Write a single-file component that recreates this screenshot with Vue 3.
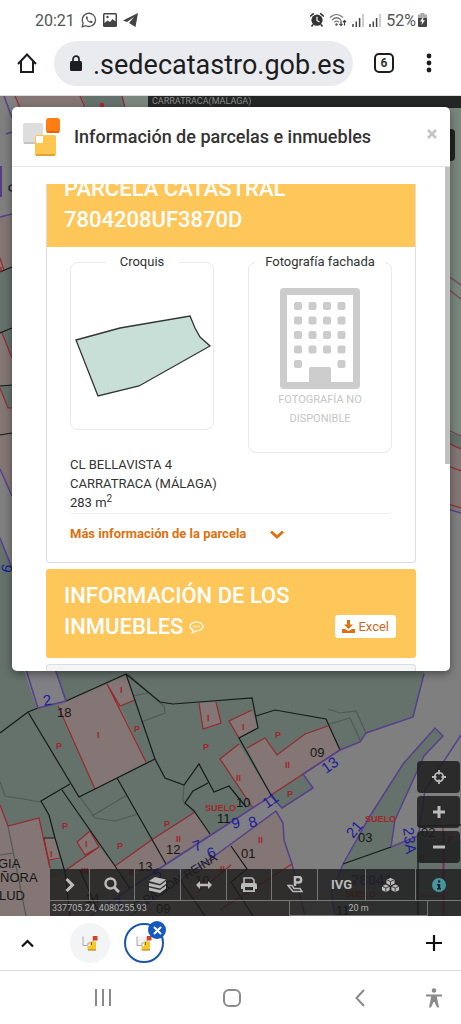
<!--
  Ficha de parcela del visor catastral, vista en el navegador del móvil.
  De arriba abajo: barra de estado, barra de direcciones, mapa con el diálogo
  de información encima, pestañas agrupadas y botones de navegación.
-->

<template>
  <div class="screen">
    <header class="status">
      <div class="status-group">
        <span class="clock">20:21</span>
        <svg width="16" height="16" viewBox="0 0 16 16" fill="none" stroke="#555" stroke-width="1.3">
          <path d="M1.2 14.8l1-3.6A6.6 6.6 0 1 1 4.800 13.700z" />
          <path d="M5.200 4.500l1-.3.9 2-.7.9c.6 1.200 1.300 1.900 2.500 2.400l.9-.9 1.900 1-.4 1.200c-2.600 1.300-7.200-3-6.100-6.300z" fill="#555" stroke="none" />
        </svg>
        <svg width="14" height="14" viewBox="0 0 14 14">
          <rect width="14" height="14" rx="1.500" fill="#444" />
          <path d="M1.500 1.500h11v7L9.500 6 7 9 4.500 7.500l-3 2.500z" fill="#fff" />
          <circle cx="4.500" cy="4" r="1.200" fill="#444" />
        </svg>
        <svg width="15" height="14" viewBox="0 0 15 14">
          <path d="M15 0L0 7.500l4 1.500L11 4 6 10l6.500 4z" fill="#444" />
        </svg>
      </div>
      <div class="status-group status-right">
        <svg width="14" height="14" viewBox="0 0 14 14">
          <path d="M0 3.500L3.800.3M14 3.500L10.200.3M3 11.500L1.500 13.500M11 11.500l1.500 2" stroke="#333" stroke-width="1.600" />
          <circle cx="7" cy="7.200" r="5.600" fill="#333" />
          <path d="M7 3.800v3.600l2.500 1.500" fill="none" stroke="#fff" stroke-width="1.200" />
        </svg>
        <svg width="18" height="14" viewBox="0 0 18 14" fill="none" stroke="#777" stroke-width="1.200">
          <path d="M1 4.500c4-4 9-4 13 0M3 7c3-3 6-3 9 0M5.200 9.300c1.500-1.500 3-1.500 4.600 0" />
          <circle cx="7.500" cy="11.500" r="1.200" fill="#555" stroke="none" />
          <path d="M12 7.500v5M10.500 11l1.500 1.500 1.500-1.500M15.500 12.500v-5M14 9l1.500-1.500L17 9" stroke="#444" />
        </svg>
        <svg v-for="n in 2" :key="n" width="12" height="13" viewBox="0 0 12 13">
          <path d="M1 13v-3M4.300 13V7.500M7.600 13V4" stroke="#444" stroke-width="1.500" />
          <path d="M11 13V0" stroke="#bbb" stroke-width="1.500" />
        </svg>
        <span class="battery">52%</span>
        <svg width="9" height="14" viewBox="0 0 9 14">
          <path d="M2.500 0h4v1.500H9V5H0V1.500h2.500z" fill="#aaa" />
          <path d="M0 5h9v8a1 1 0 0 1-1 1H1a1 1 0 0 1-1-1z" fill="#444" />
          <path d="M5.500 3.500L2 8.500h2L3.500 12 7 7.200H5z" fill="#fff" />
        </svg>
      </div>
    </header>

    <div class="address-bar">
      <button class="icon-button" aria-label="Inicio">
        <svg width="20" height="20" viewBox="0 0 20 20" fill="none" stroke="#1c1d20" stroke-width="2">
          <path d="M1 11L10 1.500 19 11M4 8.500V19h12V8.500" />
        </svg>
      </button>
      <label class="address">
        <svg width="12" height="17" viewBox="0 0 12 17">
          <path d="M3 7V4.200a3 3 0 0 1 6 0V7" fill="none" stroke="#1c1d20" stroke-width="1.700" />
          <rect y="6" width="12" height="10" rx="1.500" fill="#1c1d20" />
        </svg>
        <input v-model="url" class="address-input" type="text" aria-label="Dirección" />
      </label>
      <button class="icon-button tabs-count" aria-label="Pestañas abiertas">6</button>
      <button class="icon-button" aria-label="Más opciones">
        <svg width="6" height="20" viewBox="0 0 6 20" fill="#1c1d20">
          <circle cx="3" cy="3" r="2.400" /><circle cx="3" cy="10" r="2.400" /><circle cx="3" cy="17" r="2.400" />
        </svg>
      </button>
    </div>

    <main class="viewer">
      <svg class="map" viewBox="0 96 461 820" preserveAspectRatio="xMidYMax slice" aria-hidden="true">
        <rect y="96" width="461" height="820" fill="#7f7f7f" />

        <!-- franja superior -->
        <path class="pink" d="M16 96H81L90 110H20z" />
        <path class="green" d="M81 96H148V110H88z" />
        <path d="M123 96H148V110H126z" fill="#79877d" />
        <path class="red" d="M15 96l6 14M80 96l6 14M122 96l3 12" />
        <path class="purple" d="M4 96l8 22M6 134l6-2" />
        <rect x="100" y="103" width="4" height="6" fill="#a32a2f" />

        <!-- margen izquierdo -->
        <path class="pink" d="M0 218L12 214V670H0z" />
        <path class="green" d="M0 273L12 267V328L0 333z" />
        <path class="green" d="M2 333L12 329V357z" />
        <path class="green" d="M0 385H12V408H8z" />
        <path d="M0 470L12 495V680H0z" fill="#7f7f7f" />
        <path class="green" d="M0 538L30 610V680H0z" />
        <path class="black" d="M0 272l12-5M0 333l12-5M0 386l12-1M0 435l12-2" />
        <path class="red" d="M0 258l4 12M2 333l10 25M0 388l8 20h4" />
        <path class="purple" d="M0 217l12-3M0 469l12 27M0 538l28 70" />
        <rect y="166" width="2" height="31" fill="#563a83" />
        <circle cx="12" cy="188" r="3" class="black" />
        <path class="red" d="M1 267v5" />
        <text x="3" y="572" class="number" transform="rotate(-75 8 568)">6</text>

        <!-- margen derecho -->
        <path d="M440 108H461V440L440 430z" fill="#78867c" />
        <rect x="440" y="129" width="15" height="32" rx="4" fill="#20231f" />
        <path class="green" d="M440 430L461 436V460H440z" />
        <path class="pink" d="M440 442L461 449V511L440 505z" />
        <path class="plum" d="M448 276l13 9M448 289l13 10M448 430l13 6" />
        <path class="red" d="M448 443l13 6M448 466l13 5M448 504l13 4" />
        <path class="purple" d="M448 509l13 4" />

        <!-- manzana principal -->
        <path class="green" d="M0 660H424V674L413 717 366 733 360 742 340 750 271 795 120 895 90 916H0z" />
        <path class="road" d="M20 660L37 708 66 701 52 660z" />
        <path class="pink" d="M57 706L107 684 126 675 135 700 120 706 146 762 95 789z" />
        <path class="pink" d="M199 703L216 702 221 723 203 729z" />
        <path class="pink" d="M229 721L252 710 258 728 239 738z" />
        <path class="pink" d="M220 759L239 744 271 795 253 808z" />
        <path class="pink" d="M247 748L265 738 277 755 305 734 328 726 340 750 271 795z" />
        <path class="green" d="M271 795L303 774 313 788 282 808z" />
        <path class="pink" d="M153 839L195 812 210 834 128 888 115 866z" />
        <path class="pink" d="M0 805L8 826 39 818 50 868V916H0z" />
        <path class="pink" d="M44 838H55L60 860H49z" />
        <path class="pink" d="M77 842L90 831 99 847 85 855z" />
        <path class="pink" d="M66 871L99 847 115 866 128 888 90 916H50V880z" />

        <path class="grey" d="M0 782l5 14 36 6M80 797l15 21 20 3 23-7M92 816l35-21M133 696l15-3M141 722l24-9-1-7-36-32M184 785l-1 15 2 5" />
        <path class="grey" d="M328 709l12 4 16-2 10 22M330 724l20-6 10 22M8 826l18 90M0 855l14-2" />
        <path class="red" d="M58 706l37 83M107 684l39 78M107 684l13 22 15-6M199 703l4 26 18-6-5-21M239 738l-10-17 23-11" />
        <path class="red" d="M239 744l-19 15 33 49M247 748l18-10 12 17 28-21 23-8M271 795l69-45M153 839l42-27M153 839l-38 27M0 805l8 21 31-8 11 50" />
        <path class="red" d="M99 847l-33 23M77 842l13-11 9 16-14 8zM49 860l11-2M44 838l6 30" />
        <path class="black" d="M0 733l28-21M66 701l60-27 29 85-76 38-51-85 10-4M126 674l34 28 13 2 26-2 53-4 6 30-19 10 32 57" />
        <path class="black" d="M155 759l10 19 19 7 15-21 15 28 15-6 17 21M256 716l19-6 51 9 14 31M208 783l-15 8-8 12 9 8 16 23" />
        <path class="black" d="M70 784l-29 17 8 14 6 23 10 34 5 44M62 790l53 76 30 45M117 778l49 86M44 838h11M80 870l20 46" />

        <!-- calle y manzana inferior -->
        <path class="road" d="M271 796L165 865 90 916H130L220 852 276 811z" />
        <path class="pink" d="M276 811L283 823 284 840 292 864 305 916H130L220 852z" />
        <path class="purple" d="M23 660l15 48 28-7-14-41M424 674l-11 43-47 16-6 9-20 8-37 24 10 14-31 20-11-12-106 69-75 51" />
        <path class="purple" d="M130 916l90-64 56-41 7 12 1 17 8 24 13 52" />
        <path class="black" d="M231 846l16 23-16 13 22 34M180 880l25 36" />
        <path class="red" d="M292 864l-72 46M231 865l-34 28" />

        <!-- parcelas de la derecha -->
        <path class="green" d="M435 728L443 736 424 756 395 820 391 847 418 837 461 841V916H335L331 893 343 864 370 816 403 764z" />
        <path class="purple" d="M335 916l-4-23 12-29 27-48 33-52 32-36 8 8-19 20-29 64-4 27 29-12M461 735l-36 55-7 48M444 832v84" />
        <path class="black" d="M343 864l48-17M418 826l43-1M418 860v56" />
        <path class="red" d="M443 825v90M418 896h25" />

        <g class="label">
          <text v-for="label in labels" :key="label.id" :class="label.kind" :x="label.x" :y="label.y"
            :transform="label.turn ? `rotate(${label.turn} ${label.x} ${label.y})` : null">{{ label.text }}</text>
        </g>
      </svg>

      <div class="place">CARRATRACA(MALAGA)</div>

      <section class="dialog" role="dialog" aria-labelledby="dialog-title">
        <header class="dialog-header">
          <svg width="38" height="38" viewBox="0 0 38 38">
            <rect y="5" width="20" height="21" rx="2" fill="#ddd" />
            <path d="M1 25h19" stroke="#bbb" stroke-width="1.500" />
            <rect x="23" width="14" height="15" rx="3" fill="#ff7d12" />
            <path d="M24 14h12" stroke="#dc5b15" stroke-width="1.500" />
            <rect x="12" y="17" width="21" height="21" rx="2" fill="#fec64f" />
            <path d="M13 37h19" stroke="#d99725" stroke-width="1.500" />
            <rect x="13" y="18" width="7" height="7" rx="1" fill="#fff" />
          </svg>
          <h1 id="dialog-title" class="dialog-title">Información de parcelas e inmuebles</h1>
          <button class="close" aria-label="Cerrar">
            <svg width="10" height="10" viewBox="0 0 10 10"><path d="M1 1l8 8M9 1L1 9" stroke="#c4c4c4" stroke-width="2.600" /></svg>
          </button>
        </header>

        <div class="dialog-body">
          <div class="card">
            <h2 class="banner banner-scrolled">PARCELA CATASTRAL<br />7804208UF3870D</h2>
            <div class="card-body">
              <div class="pictures">
                <fieldset class="picture">
                  <legend>Croquis</legend>
                  <svg class="sketch" viewBox="0 0 142 157">
                    <path d="M5 68L49 56 119 44 124 56 129 65 139 74 68 114 27 124z" fill="#c7dfd7" stroke="#333" stroke-width="1.300" />
                  </svg>
                </fieldset>
                <fieldset class="picture photo">
                  <legend>Fotografía fachada</legend>
                  <svg width="80" height="101" viewBox="0 0 80 101" fill="#ccc">
                    <path fill-rule="evenodd" d="M4 0H76a4 4 0 0 1 4 4V97a4 4 0 0 1-4 4H4a4 4 0 0 1-4-4V4a4 4 0 0 1 4-4zM7 7V94H29V81a2 2 0 0 1 2-2H49a2 2 0 0 1 2 2V94H73V7z" />
                    <rect v-for="w in windows" :key="w.id" :x="w.x" :y="w.y" width="8" height="8" rx="2" />
                  </svg>
                  <p>FOTOGRAFÍA NO DISPONIBLE</p>
                </fieldset>
              </div>
              <p class="location">CL BELLAVISTA 4<br />CARRATRACA (MÁLAGA)<br />283 m<sup>2</sup></p>
              <a class="more" href="#">
                Más información de la parcela
                <svg width="14" height="9" viewBox="0 0 14 9"><path d="M1 1.500l6 5.500 6-5.500" fill="none" stroke="#e0700f" stroke-width="2.800" /></svg>
              </a>
            </div>
          </div>

          <div class="banner banner-row">
            <h2>INFORMACIÓN DE LOS INMUEBLES
              <svg width="15" height="13" viewBox="0 0 15 13">
                <path d="M7.500 1C11 1 14 2.800 14 5.300s-3 4.400-6.500 4.400L3 12l1-3C2.200 8.200 1 7 1 5.300 1 2.800 4 1 7.500 1z" fill="none" stroke="#fff" stroke-width="1.100" />
                <path d="M4 5.400h1.500M6.800 5.400h1.500M9.600 5.400h1.500" stroke="#fff" stroke-width="1.500" />
              </svg>
            </h2>
            <button class="excel">
              <svg width="13" height="13" viewBox="0 0 13 13" fill="#e0700f">
                <path d="M5 0h3v4.500h3L6.500 9 2 4.500h3z" />
                <path d="M0 9h3l3.500 2L10 9h3v4H0z" />
              </svg>
              Excel
            </button>
          </div>
          <div class="next-card"></div>
        </div>
        <div class="scrollbar"></div>
      </section>

      <div class="zoom-controls">
        <button aria-label="Mi ubicación">
          <svg width="14" height="14" viewBox="0 0 14 14" fill="none" stroke="#bbb" stroke-width="1.800">
            <circle cx="7" cy="7" r="4.300" /><path d="M7 0v4.500M7 9.500V14M0 7h4.500M9.500 7H14" />
          </svg>
        </button>
        <button aria-label="Acercar">
          <svg width="12" height="12" viewBox="0 0 12 12" stroke="#bbb" stroke-width="3"><path d="M6 0v12M0 6h12" /></svg>
        </button>
        <button aria-label="Alejar">
          <svg width="12" height="12" viewBox="0 0 12 12" stroke="#bbb" stroke-width="3"><path d="M0 6h12" /></svg>
        </button>
      </div>

      <div class="tools">
        <nav class="tool-row">
          <button aria-label="Desplegar">
            <svg width="10" height="14" viewBox="0 0 10 14"><path d="M1.500 1l6 6-6 6" fill="none" stroke="#bbb" stroke-width="3" /></svg>
          </button>
          <button aria-label="Buscar">
            <svg width="16" height="16" viewBox="0 0 16 16" fill="none" stroke="#bbb" stroke-width="2.400"><circle cx="6.500" cy="6.500" r="5" /><path d="M10 10l5 5" stroke-width="3" /></svg>
          </button>
          <button aria-label="Capas">
            <svg width="17" height="16" viewBox="0 0 17 16">
              <path d="M6 0l11 2.500L11 7 0 4z" fill="#bbb" />
              <path d="M0 6l11 2.500 6-4.500v3L11 11.500 0 9zM0 10.500l11 2.500 6-4.500v3L11 16 0 13.500z" fill="#bbb" />
            </svg>
          </button>
          <button aria-label="Medir">
            <svg width="16" height="8" viewBox="0 0 16 8" fill="#bbb"><path d="M0 4l4-4v2.800h8V0l4 4-4 4V5.200H4V8z" /></svg>
          </button>
          <button aria-label="Imprimir">
            <svg width="16" height="15" viewBox="0 0 16 15">
              <path d="M3 6V1h8l2 2v3" fill="none" stroke="#bbb" stroke-width="1.600" />
              <path fill="#bbb" fill-rule="evenodd" d="M2 6h12a2 2 0 0 1 2 2v4h-2v3H2v-3H0V8a2 2 0 0 1 2-2zM4 10v3.300h8V10z" />
            </svg>
          </button>
          <button aria-label="Street View">
            <svg width="16" height="17" viewBox="0 0 16 17" fill="none" stroke="#bbb">
              <path d="M8 10V1h3.500a2.600 2.600 0 0 1 0 5.400H8" stroke-width="2.500" />
              <path d="M1 9.500h4l2 3h6l2 3H6z" stroke-width="1.500" />
            </svg>
          </button>
          <button>IVG</button>
          <button aria-label="Edificios 3D">
            <svg width="19" height="16" viewBox="0 0 19 16" fill="#bbb" stroke="#222" stroke-width=".8">
              <path d="M9.500.5L14 2.500V7L9.500 9 5 7V2.500zM4.800 7L9 9v4.500l-4.200 2L.5 13.500V9zM14.200 7l4.300 2v4.500l-4.300 2-4.200-2V9z" />
              <path d="M5.500 2.700l4 1.800 4-1.800M9.500 4.500V8M1 9.200L4.800 11 9 9.200M4.800 11v4M10 9.200l4.200 1.800 4-1.800M14.200 11v4" fill="none" />
            </svg>
          </button>
          <button aria-label="Información">
            <svg width="14" height="14" viewBox="0 0 14 14">
              <circle cx="7" cy="7" r="7" fill="#45969e" />
              <path d="M6 2.500h2.200v2H6zM5 6h3.200v4H9v1.500H5V10h1V7.500H5z" fill="#202020" />
            </svg>
          </button>
        </nav>
        <div class="coordinates">
          <span>337705.24, 4080255.93</span>
          <span class="scale">20 m</span>
        </div>
      </div>
    </main>

    <div class="tab-strip">
      <button class="icon-button" aria-label="Expandir">
        <svg width="13" height="9" viewBox="0 0 13 9"><path d="M1 7.500l5.500-5.500L12 7.500" fill="none" stroke="#111" stroke-width="2.200" /></svg>
      </button>
      <button v-for="tab in tabs" :key="tab.id" class="tab" :class="{ active: tab.active }" :aria-label="tab.title">
        <svg width="16" height="16" viewBox="0 0 16 16">
          <path d="M1 1.500v9h5V8h5V1.500" fill="#f2f2f2" stroke="#aaa" stroke-width="1" />
          <rect x="11" y="1" width="4.500" height="4.500" fill="#d24322" />
          <path d="M8 6.500h6V15H5.500v-4H8z" fill="#f6c62c" />
          <path d="M6 15h8" stroke="#b88a22" stroke-width="1.200" />
          <path d="M9.500 7v3" stroke="#8a6420" />
        </svg>
        <span v-if="tab.active" class="badge">
          <svg width="9" height="9" viewBox="0 0 9 9"><path d="M1 1l7 7M8 1L1 8" stroke="#fff" stroke-width="2" /></svg>
        </span>
      </button>
      <button class="icon-button add" aria-label="Nueva pestaña">
        <svg width="16" height="16" viewBox="0 0 16 16"><path d="M8 0v16M0 8h16" stroke="#111" stroke-width="2.200" /></svg>
      </button>
    </div>

    <nav class="system-bar">
      <button class="icon-button" aria-label="Recientes">
        <svg width="18" height="17" viewBox="0 0 18 17"><path d="M2 0v17M9 0v17M16 0v17" stroke="#8a8a8a" stroke-width="2" /></svg>
      </button>
      <button class="icon-button" aria-label="Inicio del sistema">
        <svg width="18" height="18" viewBox="0 0 18 18"><rect x="1" y="1" width="16" height="16" rx="5" fill="none" stroke="#8a8a8a" stroke-width="2" /></svg>
      </button>
      <button class="icon-button" aria-label="Atrás">
        <svg width="10" height="18" viewBox="0 0 10 18"><path d="M9 1L1.500 9 9 17" fill="none" stroke="#8a8a8a" stroke-width="2" /></svg>
      </button>
      <button class="icon-button" aria-label="Accesibilidad">
        <svg width="16" height="20" viewBox="0 0 16 20" fill="#8a8a8a">
          <circle cx="8" cy="2.500" r="2.300" />
          <path d="M0 6.500h16v2h-5.200l2.200 11h-2L8.500 14h-1L5 19.500H3l2.200-11H0z" />
        </svg>
      </button>
    </nav>
  </div>
</template>

<script setup>
import { ref } from 'vue';

const url = ref('.sedecatastro.gob.es');

const tabs = [
  { id: 1, title: 'Sede del Catastro', active: false },
  { id: 2, title: 'Visor cartográfico', active: true }
];

// kind: number = portal, plot = parcela, use = uso o plantas, name = calle
const labels = [
  ['number', 44, 706, '2', -10],
  ['plot', 57, 717, '18'],
  ['plot', 310, 757, '09'],
  ['plot', 236, 807, '10'],
  ['plot', 217, 823, '11'],
  ['plot', 166, 854, '12'],
  ['plot', 138, 871, '13'],
  ['plot', 85, 903, '14'],
  ['plot', 241, 858, '01'],
  ['plot', 358, 842, '03'],
  ['plot', 421, 837, '02'],
  ['plot', 156, 913, '09'],
  ['plot', 195, 885, '10'],
  ['plot', 336, 915, '11'],
  ['number', 326, 774, '13', -35],
  ['number', 267, 809, '11', -35],
  ['number', 233, 829, '9', -15],
  ['number', 250, 828, '8', -15],
  ['number', 195, 852, '7', -20],
  ['number', 209, 859, '6', -20],
  ['number', 155, 880, '5', -20],
  ['number', 116, 909, '3', -20],
  ['number', 353, 839, '21', -50],
  ['number', 403, 828, '23A', 83],
  ['use', 205, 811, 'SUELO'],
  ['use', 365, 822, 'SUELO'],
  ['use', 345, 897, 'SUELO'],
  ['use', 56, 749, 'P'],
  ['use', 97, 738, 'I'],
  ['use', 120, 693, 'I'],
  ['use', 134, 732, 'P'],
  ['use', 207, 721, 'I'],
  ['use', 203, 750, 'P'],
  ['use', 242, 730, 'I'],
  ['use', 275, 738, 'P'],
  ['use', 285, 768, 'II'],
  ['use', 236, 781, 'II'],
  ['use', 287, 797, 'P'],
  ['use', 62, 829, 'P'],
  ['use', 50, 857, 'I'],
  ['use', 85, 847, 'I'],
  ['use', 117, 849, 'P'],
  ['use', 164, 827, 'P'],
  ['use', 176, 842, 'II'],
  ['use', 81, 874, 'III'],
  ['use', 129, 875, 'II'],
  ['use', 220, 872, 'II'],
  ['use', 258, 843, 'II'],
  ['use', 420, 860, 'II'],
  ['use', 448, 842, 'P'],
  ['plot', -2, 868, 'GIA'],
  ['plot', 0, 882, 'ÑORA'],
  ['plot', -1, 900, 'LUD'],
  ['name', 136, 911, 'C PASION REINA', -32],
  ['code', 351, 885, '78041']
].map(([kind, x, y, text, turn], id) => ({ id, kind, x, y, text, turn }));

// ventanas del edificio; en la planta baja solo quedan las de los extremos
const windows = [];
for (let row = 0; row < 5; row++) {
  for (let col = 0; col < 4; col++) {
    if (row === 4 && (col === 1 || col === 2)) continue;
    windows.push({ id: `${row}-${col}`, x: 14 + col * 14.5, y: 14 + row * 14.5 });
  }
}
</script>

<style>
body {
  margin: 0;
  background: #fff;
}
</style>

<style scoped>
.screen {
  display: flex;
  flex-direction: column;
  min-height: 100vh;
  font-family: Roboto, "Liberation Sans", sans-serif;
  color: #333;
}

.screen * {
  box-sizing: border-box;
}

button {
  font: inherit;
  color: inherit;
  border: 0;
  padding: 0;
  background: none;
  cursor: pointer;
  display: flex;
  align-items: center;
  justify-content: center;
}

svg {
  flex: none;
}

.status {
  display: flex;
  justify-content: space-between;
  align-items: center;
  height: 40px;
  padding: 0 34px 0 35px;
  font-size: 16px;
  color: #555;
}

.status-group {
  display: flex;
  align-items: center;
  gap: 6px;
}

.status-right {
  gap: 5px;
}

.battery {
  margin-right: -3px;
}

.address-bar {
  display: flex;
  align-items: center;
  gap: 17px;
  height: 56px;
  padding: 0 22px 9px 17px;
  border-bottom: 1px solid #ddd;
}

.icon-button {
  min-width: 20px;
  height: 24px;
}

.address {
  display: flex;
  align-items: center;
  gap: 11px;
  flex: 1;
  height: 45px;
  margin-right: 4px;
  padding: 0 8px 0 16px;
  border-radius: 23px;
  background: #e9ebef;
}

.address-input {
  flex: 1;
  min-width: 0;
  width: 0;
  padding: 3px 0 0;
  border: 0;
  outline: 0;
  background: none;
  font: 27px Roboto, "Liberation Sans", sans-serif;
  color: #1c1d20;
}

.tabs-count {
  height: 20px;
  margin-right: 8px;
  border: 2px solid #1c1d20;
  border-radius: 5px;
  font-size: 12px;
  font-weight: bold;
}

.viewer {
  position: relative;
  flex: 1;
  padding: 11px 11px 245px 12px;
  overflow: hidden;
}

.map {
  position: absolute;
  top: 0;
  left: 0;
  width: 100%;
  height: 100%;
}

.green { fill: #64726b; }
.pink { fill: #837674; }
.road { fill: #807f83; }

.black, .red, .purple, .grey, .plum {
  fill: none;
  stroke-width: 1.2;
}

.green, .pink, .road {
  stroke: none;
}

.black { stroke: #151a18; }
.red { stroke: #97292d; }
.purple { stroke: #56408c; stroke-width: 1.5; }
.grey { stroke: #505a55; }
.plum { stroke: #7c4057; }

.label, .number {
  font-family: "Liberation Sans", Arial, sans-serif;
}

.number { font-size: 15px; fill: #1c1c9c; }
.plot { font-size: 13px; fill: #161616; }
.use { font-size: 9px; font-weight: bold; fill: #a3252a; }
.name { font-size: 12px; fill: #161616; }
.code { font-size: 15px; font-weight: bold; fill: #48357c; }

.place {
  position: absolute;
  top: 0;
  left: 148px;
  right: 0;
  height: 12px;
  padding-left: 4px;
  background: #232624;
  color: #8b8b8b;
  font-size: 9px;
  line-height: 10px;
}

.dialog {
  position: relative;
  border-radius: 5px;
  background: #fff;
  overflow: hidden;
  box-shadow: 0 3px 9px rgba(0, 0, 0, 0.4);
}

.dialog-header {
  display: flex;
  align-items: center;
  gap: 13px;
  height: 60px;
  padding: 0 13px 0 11px;
  border-bottom: 1px solid #e5e5e5;
}

.dialog-title {
  flex: 1;
  margin: 0;
  font-size: 18px;
  font-weight: 500;
  white-space: nowrap;
}

.close {
  padding-bottom: 6px;
}

.dialog-body {
  padding: 17px 34px 0;
}

.scrollbar {
  position: absolute;
  top: 60px;
  right: 0;
  width: 5px;
  height: 297px;
  background: #c1c1c1;
}

.card {
  border: 1px solid #ddd;
  border-top: 0;
  border-radius: 0 0 4px 4px;
  margin-bottom: 6px;
}

.banner {
  padding: 11px 20px 16px 18px;
  background: #ffc65a;
  color: #fff;
}

.banner, .banner h2 {
  margin: 0;
  font-size: 22px;
  font-weight: 500;
  line-height: 31px;
}

.banner-scrolled {
  display: flex;
  flex-direction: column;
  justify-content: flex-end;
  height: 63px;
  padding: 0 18px 12px 17px;
  overflow: hidden;
}

.banner-row {
  display: flex;
  align-items: flex-end;
  justify-content: space-between;
  border-radius: 3px;
}

.banner-row h2 {
  max-width: 240px;
}

.card-body {
  padding: 5px 23px 18px;
}

.pictures {
  display: grid;
  grid-template-columns: repeat(2, minmax(0, 1fr));
  align-items: start;
  gap: 34px;
}

.picture {
  min-width: 0;
  margin: 0;
  padding: 0;
  border: 1px solid #e9e9e9;
  border-radius: 8px;
  font-size: 13px;
  text-align: center;
}

.picture legend {
  margin: 0 auto;
  padding: 0 15px;
  line-height: 20px;
  white-space: nowrap;
}

.sketch {
  display: block;
  width: 100%;
}

.photo {
  padding: 16px 0 24px;
}

.photo legend {
  padding: 0 10px;
}

.photo svg {
  display: block;
  margin: 0 auto;
}

.photo p {
  margin: 1px 20px 0;
  color: #c6c6c6;
  font-size: 11px;
  line-height: 19px;
}

.location {
  margin: 2px 0 0;
  padding-bottom: 1px;
  border-bottom: 1px solid #f1f1f1;
  border-radius: 4px;
  font-size: 13px;
  line-height: 19px;
}

.location sup {
  font-size: 10px;
  line-height: 0;
}

.more {
  display: flex;
  align-items: center;
  gap: 24px;
  margin-top: 10px;
  color: #e0700f;
  font-size: 13px;
  font-weight: bold;
  line-height: 20px;
  text-decoration: none;
}

.excel {
  gap: 3px;
  height: 23px;
  margin-bottom: 4px;
  padding: 0 7px;
  border-radius: 3px;
  background: #fff;
  color: #c96a1e;
  font-size: 13px;
  font-weight: 400;
}

.next-card {
  height: 7px;
  margin-top: 6px;
  border: 1px solid #ddd;
  border-bottom: 0;
  border-radius: 4px 4px 0 0;
  background: #f5f5f5;
}

.zoom-controls {
  position: absolute;
  right: 1px;
  bottom: 53px;
  display: flex;
  flex-direction: column;
  gap: 3px;
}

.zoom-controls button {
  width: 43px;
  height: 32px;
  border-radius: 4px;
  background: rgba(28, 28, 28, 0.84);
}

.tools {
  position: absolute;
  left: 50px;
  right: 0;
  bottom: 0;
}

.tool-row {
  display: grid;
  grid-template-columns: 40fr 45fr 46fr 46fr 45fr 46fr 48fr 50fr 45fr;
  height: 31px;
}

.tool-row button {
  background: rgba(28, 28, 28, 0.8);
  border-right: 1px solid #777;
  color: #bbb;
  font-size: 13px;
  font-weight: bold;
}

.tool-row button:last-child {
  border-right: 0;
}

.coordinates {
  display: flex;
  justify-content: space-between;
  height: 16px;
  padding-left: 2px;
  border-top: 1px solid #777;
  background: rgba(28, 28, 28, 0.76);
  color: #b5b5b5;
  font-size: 9px;
  line-height: 15px;
}

.scale {
  width: 139px;
  margin-right: 33px;
  border: solid #777;
  border-width: 0 1px 1px;
  text-align: center;
}

.tab-strip {
  display: flex;
  align-items: center;
  height: 55px;
  padding: 0 17px;
  border-bottom: 1px solid #ddd;
}

.tab {
  position: relative;
  width: 40px;
  height: 40px;
  margin-left: 14px;
  border-radius: 50%;
  background: #f2f4f6;
}

.tab:nth-child(2) {
  margin-left: 33px;
}

.tab.active {
  border: 2px solid #1a56b0;
  background: #fff;
}

.badge {
  position: absolute;
  top: -4px;
  right: -4px;
  display: flex;
  align-items: center;
  justify-content: center;
  width: 18px;
  height: 18px;
  border-radius: 50%;
  background: #1558c0;
}

.add {
  margin-left: auto;
}

.system-bar {
  display: grid;
  grid-template-columns: 130fr 128fr 128fr 20fr;
  align-items: center;
  justify-items: center;
  height: 53px;
  padding: 0 17px 0 38px;
}
</style>
